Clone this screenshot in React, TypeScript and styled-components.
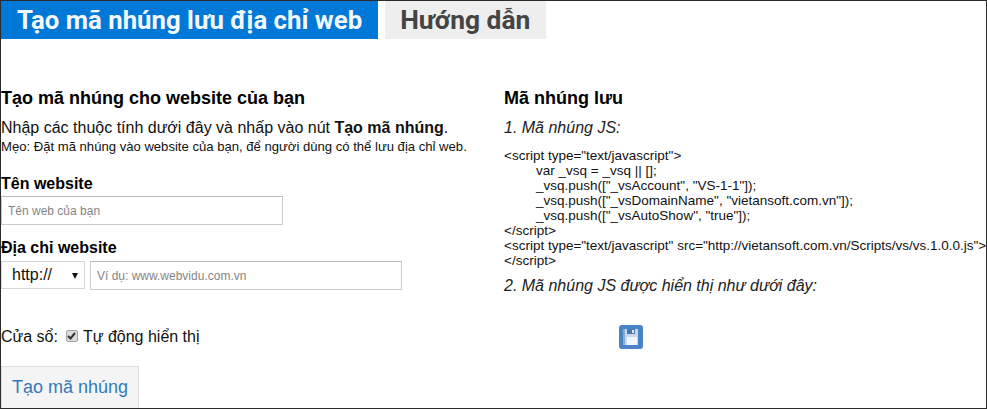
import React from "react";
import styled, { createGlobalStyle } from "styled-components";

const Global = createGlobalStyle`
  html, body { margin: 0; padding: 0; background: #fff; }
  body { font-family: "Liberation Sans", Arial, sans-serif; color: #111; }
  * { box-sizing: border-box; }
`;
const Frame = styled.div`
  width: 987px; height: 409px; overflow: hidden;
  border: 1px solid #2b2b2b;
`;
const Tabs = styled.div`display: flex; gap: 7px; height: 38px;`;
const Tab = styled.div<{ $active?: boolean }>`
  font-family: Roboto, sans-serif; font-weight: 700; line-height: 38px;
  font-size: ${p => (p.$active ? "25.75px" : "26.4px")};
  padding: ${p => (p.$active ? "0 16px" : "0 16px 0 15px")};
  background: ${p => (p.$active ? "#0078d7" : "#eeeeee")};
  color: ${p => (p.$active ? "#f4f8fc" : "#444444")};
`;
const Columns = styled.div`display: flex; padding-top: 49px;`;
const Left = styled.div`width: 503px;`;
const Right = styled.div`flex: 1; min-width: 0; white-space: nowrap;`;
const Heading = styled.h2`margin: 0; font-size: 18px; line-height: 21px; font-weight: 700; color: #000;`;
const Intro = styled.p`margin: 9px 0 0; font-size: 16px; line-height: 20px; color: #111;`;
const Tip = styled.p`margin: 1px 0 0; font-size: 13.1px; line-height: 16px; color: #111;`;
const Label = styled.label`display: block; font-size: 16px; line-height: 18px; font-weight: 700; color: #000;`;
const NameField = styled.div`margin-top: 20px;`;
const AddressField = styled.div`margin-top: 14px;`;
const Input = styled.input<{ $width: number }>`
  display: block; width: ${p => p.$width}px; height: 29px; margin-top: 3px;
  border: 1px solid #ccc; border-top-color: #bbb; padding: 0 6px; outline: none; background: #fff;
  font-family: "Liberation Sans", sans-serif; font-size: 12px; color: #111;
  &::placeholder { color: #858585; opacity: 1; }
`;
const UrlRow = styled.div`display: flex; gap: 5px; align-items: flex-start; margin-top: 4px;`;
const Select = styled.div`
  position: relative; width: 84px; height: 28px; border: 1px solid #d5d5d5;
  padding-left: 10px; font-size: 16px; line-height: 25px; color: #111;
`;
const Arrow = styled.span`
  position: absolute; right: 6px; top: 11px; width: 0; height: 0;
  border-left: 3px solid transparent; border-right: 3px solid transparent; border-top: 6px solid #111;
`;
const UrlInput = styled(Input)`margin-top: 0;`;
const CheckRow = styled.div`display: flex; align-items: center; margin-top: 37px; font-size: 16px; line-height: 20px; color: #111;`;
const Check = styled.span`
  width: 12px; height: 12px; margin: 0 5px 2px 8px; border: 1px solid #a5a5a5; border-radius: 2px; background: #dcdcdc;
  display: flex; align-items: center; justify-content: center;
`;
const SubmitButton = styled.button`
  display: block; margin: 19px 0 0; width: 138px; height: 43px; padding: 0 0 1px;
  background: #f4f4f4; border: 1px solid #ddd; font-family: "Liberation Sans", sans-serif;
  font-size: 18px; color: #337ab7;
`;
const Step = styled.p<{ $top: number }>`margin: ${p => p.$top}px 0 0; font-size: 16px; line-height: 20px; font-style: italic; color: #222;`;
const Code = styled.pre`
  margin: 10px 0 0; font-family: "Liberation Sans", sans-serif; font-size: 13.5px; line-height: 15px;
  color: #111; overflow: hidden;
`;
const IndentedLine = styled.span`display: block; padding-left: 32px;`;
const IconRow = styled.div`margin: 29px 0 0 115px; width: 24px; height: 24px;`;

const SaveIcon = () => (
  <svg width="24" height="24" viewBox="0 0 24 24" style={{ display: "block" }}>
    <rect width="24" height="24" rx="3" fill="#4a83c6" />
    <path d="M4 4h15v16H4z" fill="#c5d8ec" />
    <path d="M4 4h2v16H4z" fill="#86aad4" />
    <path d="M8 4h8v5H8z" fill="#4a78ab" />
    <path d="M13 5h2v3h-2z" fill="#e0eaf5" />
    <path d="M8 12h10v8H8z" fill="#f2f5fa" />
  </svg>
);

export default function App() {
  return (
    <Frame>
      <Global />
      <Tabs>
        <Tab $active>Tạo mã nhúng lưu địa chỉ web</Tab>
        <Tab>Hướng dẫn</Tab>
      </Tabs>
      <Columns>
        <Left>
          <Heading>Tạo mã nhúng cho website của bạn</Heading>
          <Intro>Nhập các thuộc tính dưới đây và nhấp vào nút <b>Tạo mã nhúng</b>.</Intro>
          <Tip>Mẹo: Đặt mã nhúng vào website của bạn, để người dùng có thể lưu địa chỉ web.</Tip>
          <NameField>
            <Label>Tên website</Label>
            <Input $width={282} placeholder="Tên web của bạn" />
          </NameField>
          <AddressField>
            <Label>Địa chỉ website</Label>
            <UrlRow>
              <Select>http://<Arrow /></Select>
              <UrlInput $width={312} placeholder="Ví dụ: www.webvidu.com.vn" />
            </UrlRow>
          </AddressField>
          <CheckRow>
            Cửa sổ:
            <Check>
              <svg width="9" height="8" viewBox="0 0 9 8"><path d="M1 4l2.5 2.5L8 1" fill="none" stroke="#333" strokeWidth="2" /></svg>
            </Check>
            Tự động hiển thị
          </CheckRow>
          <SubmitButton>Tạo mã nhúng</SubmitButton>
        </Left>
        <Right>
          <Heading>Mã nhúng lưu</Heading>
          <Step $top={9}>1. Mã nhúng JS:</Step>
          <Code>
            {'<script type="text/javascript">'}
            <IndentedLine>{'var _vsq = _vsq || [];'}</IndentedLine>
            <IndentedLine>{'_vsq.push(["_vsAccount", "VS-1-1"]);'}</IndentedLine>
            <IndentedLine>{'_vsq.push(["_vsDomainName", "vietansoft.com.vn"]);'}</IndentedLine>
            <IndentedLine>{'_vsq.push(["_vsAutoShow", "true"]);'}</IndentedLine>
            {'</script>\n<script type="text/javascript" src="http://vietansoft.com.vn/Scripts/vs/vs.1.0.0.js">\n</script>'}
          </Code>
          <Step $top={8}>2. Mã nhúng JS được hiển thị như dưới đây:</Step>
          <IconRow><SaveIcon /></IconRow>
        </Right>
      </Columns>
    </Frame>
  );
}
